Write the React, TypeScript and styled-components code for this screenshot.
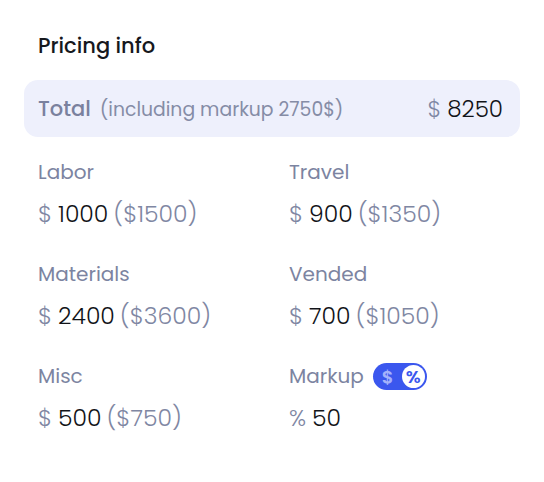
import styled, { createGlobalStyle } from "styled-components";

const Global = createGlobalStyle`
  html, body { margin: 0; padding: 0; background: #ffffff; }
  body { font-family: Poppins, "Open Sans", "Liberation Sans", sans-serif; }
`;

const Panel = styled.div`
  width: 544px;
  height: 482px;
  box-sizing: border-box;
  padding: 31px 24px 0 24px;
  background: #fff;
`;

const Title = styled.h2`
  margin: 0 0 19px 14px;
  font-size: 21px;
  font-weight: 500;
  color: #16181d;
  line-height: 30px;
`;

const TotalCard = styled.div`
  display: flex;
  align-items: center;
  justify-content: space-between;
  height: 57px;
  padding: 0 17px 0 14px;
  border-radius: 14px;
  background: #eef0fc;
`;

const TotalLabel = styled.div`
  display: flex;
  align-items: baseline;
  gap: 9px;
`;

const TotalWord = styled.span`
  font-size: 21px;
  font-weight: 500;
  color: #7a819e;
`;

const TotalNote = styled.span`
  font-size: 18.8px;
  color: #858ca6;
`;

const Amount = styled.span<{ $size?: number }>`
  font-weight: 300;
  font-size: ${(p) => p.$size || 23.5}px;
  color: #111318;
`;

const Unit = styled.span`
  color: #7f87a3;
  margin-right: 6px;
`;

const Grid = styled.div`
  display: grid;
  grid-template-columns: 251px 1fr;
  row-gap: 28px;
  padding: 21px 14px 0 14px;
`;

const Cell = styled.div`
  display: flex;
  flex-direction: column;
  gap: 10px;
`;

const Label = styled.div`
  display: flex;
  align-items: center;
  gap: 9px;
  height: 28px;
  font-size: 20px;
  color: #7c84a1;
`;

const Value = styled(Amount)`
  display: block;
  line-height: 36px;
`;

const Alt = styled.span`
  color: #7f87a3;
  margin-left: 5px;
`;

const Toggle = styled.div`
  display: flex;
  align-items: center;
  justify-content: space-between;
  width: 54px;
  height: 27px;
  box-sizing: border-box;
  padding: 0 2px 0 9px;
  border-radius: 14px;
  background: #3b57ee;
`;

const ToggleOff = styled.span`
  font-size: 18px;
  font-weight: 600;
  color: #a3b2fb;
`;

const Knob = styled.span`
  display: flex;
  align-items: center;
  justify-content: center;
  width: 23px;
  height: 23px;
  border-radius: 50%;
  background: #fff;
  color: #3b57ee;
  font-size: 18px;
  font-weight: 600;
`;

type Item = { label: string; value: string; alt?: string; unit: string; toggle?: boolean };

const items: Item[] = [
  { label: "Labor", unit: "$", value: "1000", alt: "($1500)" },
  { label: "Travel", unit: "$", value: "900", alt: "($1350)" },
  { label: "Materials", unit: "$", value: "2400", alt: "($3600)" },
  { label: "Vended", unit: "$", value: "700", alt: "($1050)" },
  { label: "Misc", unit: "$", value: "500", alt: "($750)" },
  { label: "Markup", unit: "%", value: "50", toggle: true },
];

export default function App() {
  return (
    <>
      <Global />
      <Panel>
        <Title>Pricing info</Title>
        <TotalCard>
          <TotalLabel>
            <TotalWord>Total</TotalWord>
            <TotalNote>(including markup 2750$)</TotalNote>
          </TotalLabel>
          <Amount $size={23}>
            <Unit>$</Unit>8250
          </Amount>
        </TotalCard>
        <Grid>
          {items.map((it) => (
            <Cell key={it.label}>
              <Label>
                {it.label}
                {it.toggle && (
                  <Toggle>
                    <ToggleOff>$</ToggleOff>
                    <Knob>%</Knob>
                  </Toggle>
                )}
              </Label>
              <Value>
                <Unit>{it.unit}</Unit>
                {it.value}
                {it.alt && <Alt>{it.alt}</Alt>}
              </Value>
            </Cell>
          ))}
        </Grid>
      </Panel>
    </>
  );
}
